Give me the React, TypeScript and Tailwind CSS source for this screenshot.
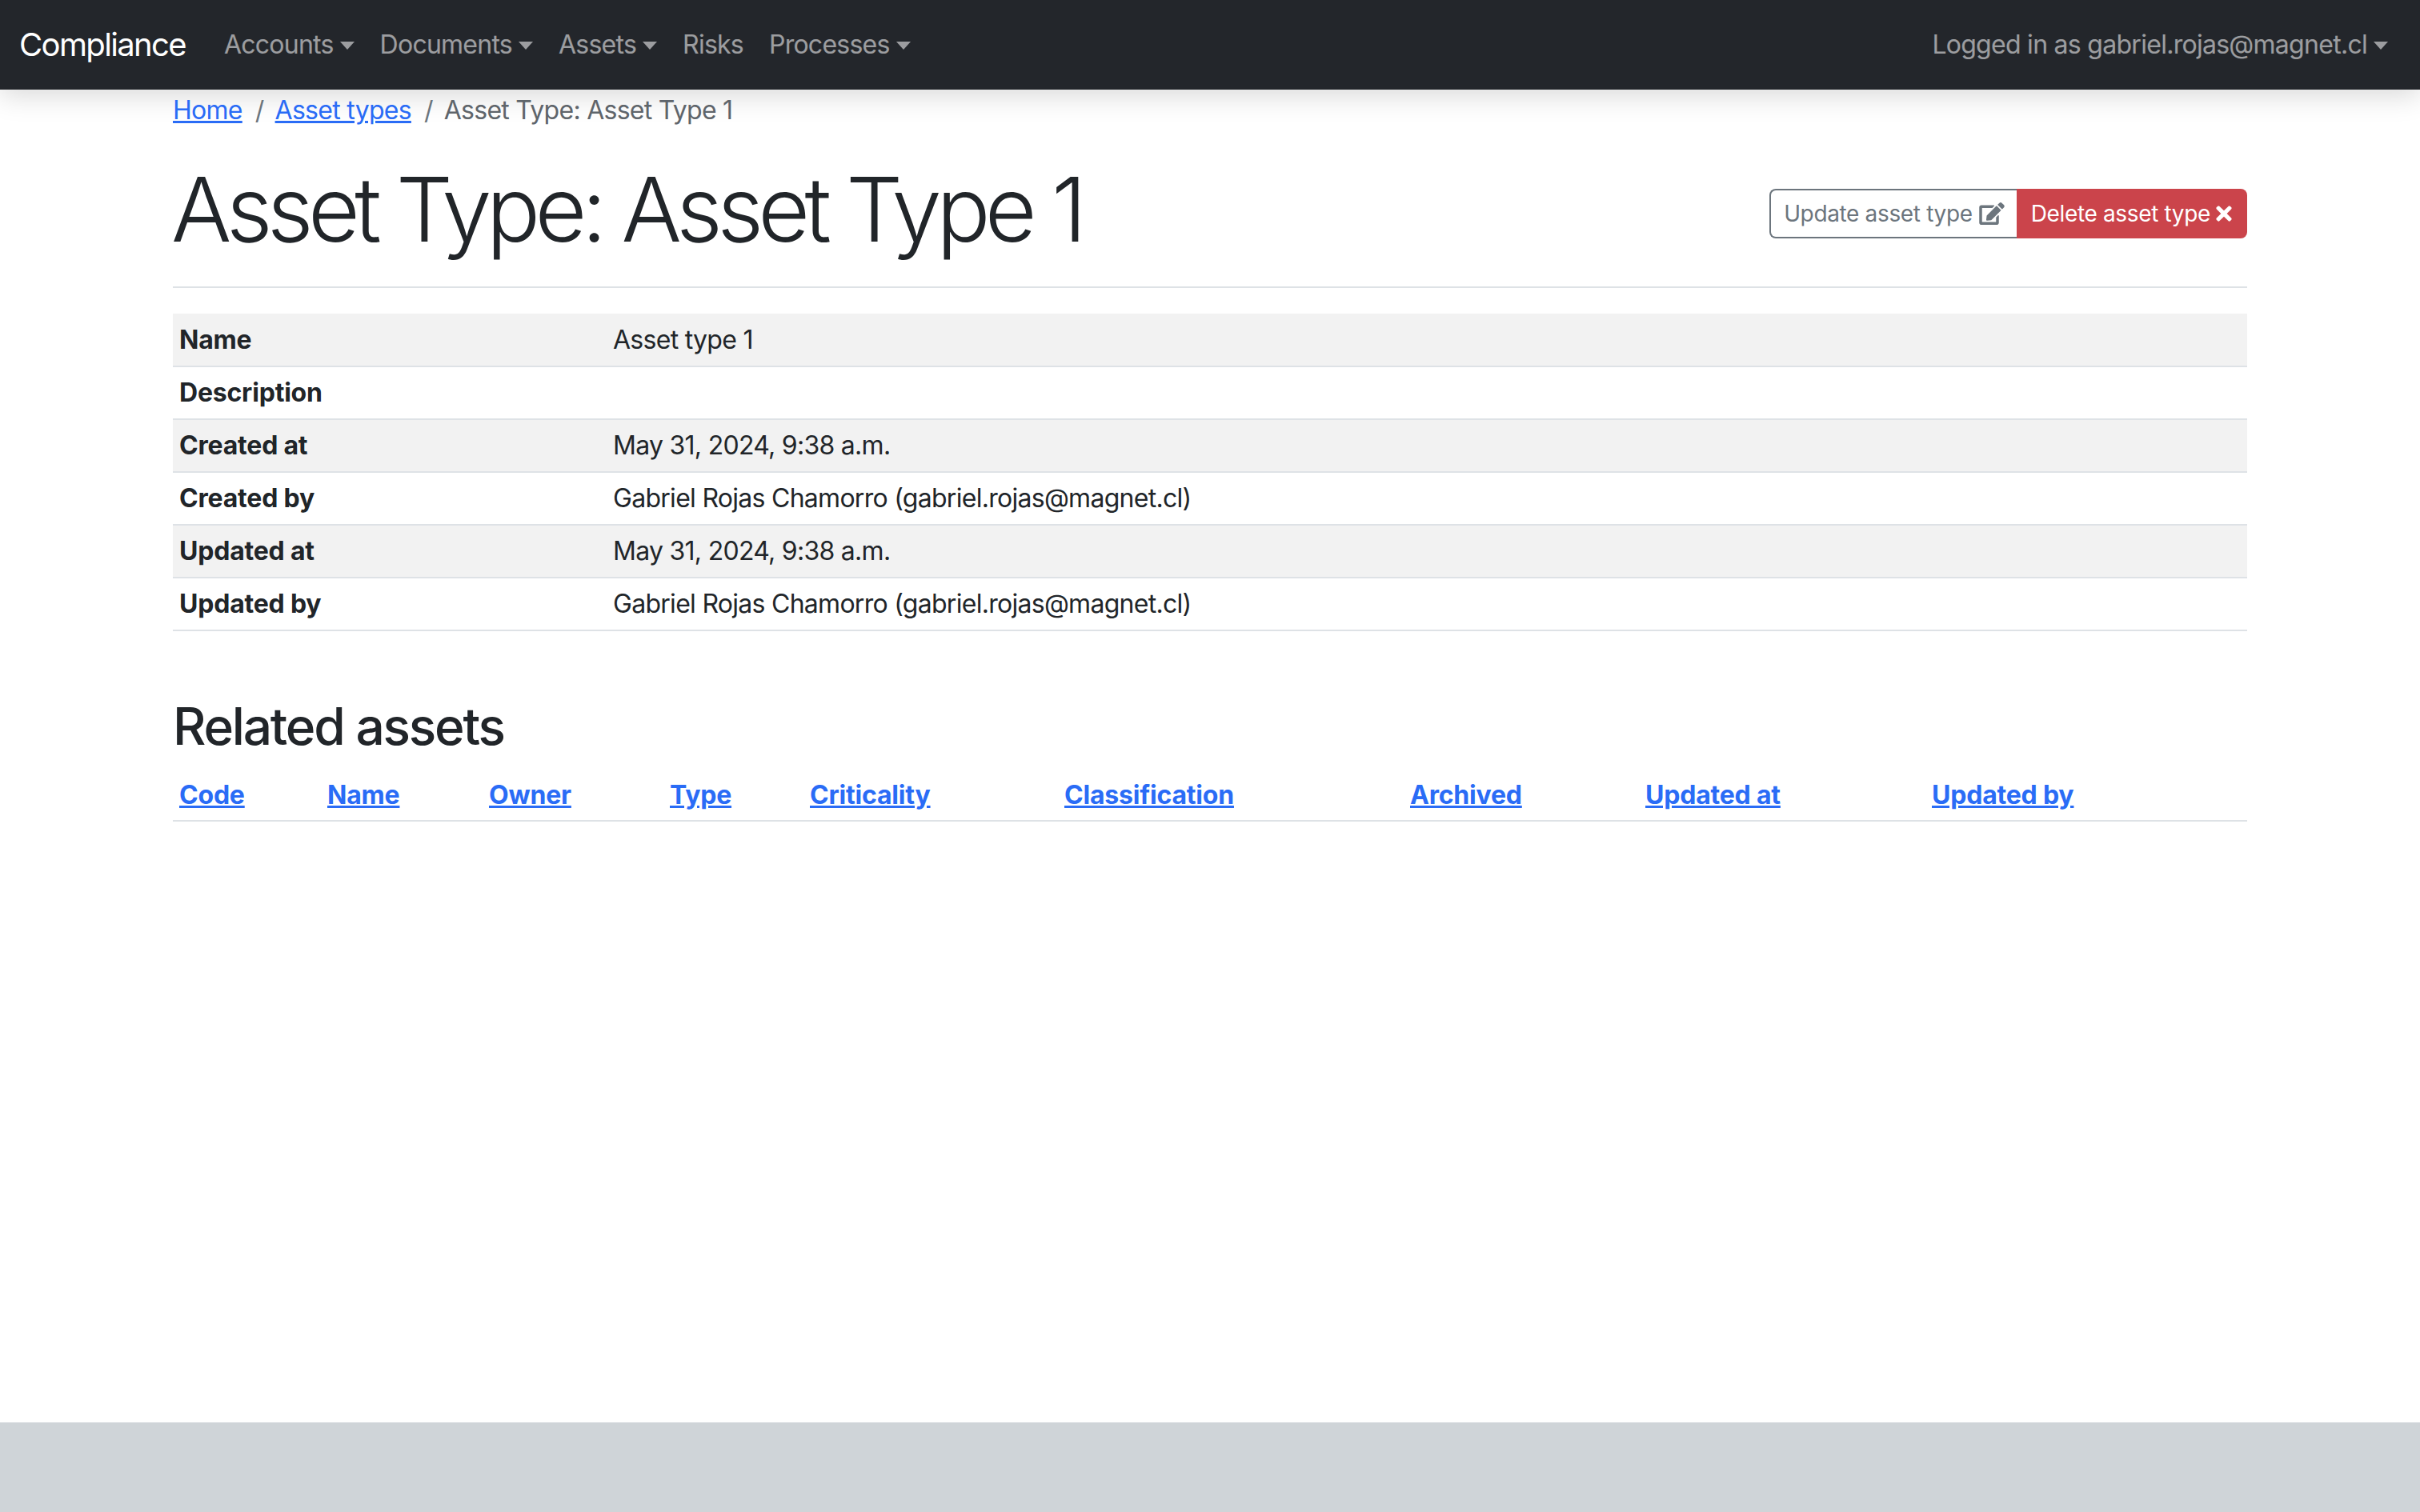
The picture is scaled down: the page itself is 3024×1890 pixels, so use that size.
import { FaEdit, FaTimes } from 'react-icons/fa';

const navItems = [
  { label: 'Accounts', caret: true },
  { label: 'Documents', caret: true },
  { label: 'Assets', caret: true },
  { label: 'Risks', caret: false },
  { label: 'Processes', caret: true },
];

const details = [
  ['Name', 'Asset type 1'],
  ['Description', ''],
  ['Created at', 'May 31, 2024, 9:38 a.m.'],
  ['Created by', 'Gabriel Rojas Chamorro (gabriel.rojas@magnet.cl)'],
  ['Updated at', 'May 31, 2024, 9:38 a.m.'],
  ['Updated by', 'Gabriel Rojas Chamorro (gabriel.rojas@magnet.cl)'],
];

const columns = [
  { label: 'Code', width: 185 },
  { label: 'Name', width: 202 },
  { label: 'Owner', width: 226 },
  { label: 'Type', width: 175 },
  { label: 'Criticality', width: 318 },
  { label: 'Classification', width: 432 },
  { label: 'Archived', width: 294 },
  { label: 'Updated at', width: 358 },
  { label: 'Updated by', width: 402 },
];

function Caret() {
  return (
    <span className="ml-[8px] inline-block align-[5px] border-x-[9px] border-t-[10px] border-x-transparent border-t-current" />
  );
}

export default function App() {
  return (
    <div className="flex min-h-screen flex-col bg-white font-['Inter','Liberation_Sans',sans-serif] text-[32px] leading-[48px] tracking-[-0.72px] text-[#212529]">
      {/* Navbar */}
      <nav className="flex h-[112px] items-center justify-between bg-[#23262b] px-[24px] shadow-[0_8px_32px_rgba(0,0,0,0.15)]">
        <div className="flex items-center">
          <a className="mr-[32px] text-[40px] tracking-[-1.65px] text-white">Compliance</a>
          {navItems.map((item) => (
            <a key={item.label} className="px-[16px] tracking-[-0.75px] text-white/55">
              {item.label}
              {item.caret && <Caret />}
            </a>
          ))}
        </div>
        <a className="pr-[16px] text-white/55">
          Logged in as gabriel.rojas@magnet.cl
          <Caret />
        </a>
      </nav>

      <main className="mx-auto w-[2592px] pt-[2px]">
        {/* Breadcrumb */}
        <div className="flex">
          <a className="text-[#2a6cf6] underline">Home</a>
          <span className="pr-[14px] pl-[16px] text-[#6c757d]">/</span>
          <a className="text-[#2a6cf6] underline">Asset types</a>
          <span className="pr-[14px] pl-[16px] text-[#6c757d]">/</span>
          <span className="text-[#5f656b]">Asset Type: Asset Type 1</span>
        </div>

        {/* Header */}
        <div className="mt-[32px] flex items-center justify-between border-b-2 border-[#dee2e6] pb-[30px]">
          <h1 className="-ml-[2px] text-[112px] leading-[134px] font-light tracking-[-6.7px]">Asset Type: Asset Type 1</h1>
          <div className="mt-[12px] flex text-[28px] leading-[42px] tracking-[-0.35px]">
            <a className="flex h-[62px] items-center gap-[8px] rounded-l-[8px] border-2 border-r-0 border-[#6c757d] pr-[15px] pl-[16px] text-[#6c757d]">
              Update asset type
              <FaEdit className="h-[28px] w-[32px]" />
            </a>
            <a className="flex h-[62px] items-center gap-[6px] rounded-r-[8px] bg-[#cb444b] px-[18px] text-white">
              Delete asset type
              <FaTimes className="h-[28px] w-[22px]" />
            </a>
          </div>
        </div>

        {/* Details */}
        <table className="mt-[32px] w-full table-fixed border-collapse">
          <tbody>
            {details.map(([label, value], i) => (
              <tr key={label} className={i % 2 === 0 ? 'border-b-2 border-[#dee2e6] bg-[#f2f2f2]' : 'border-b-2 border-[#dee2e6]'}>
                <th className="h-[66px] w-[542px] px-[8px] text-left font-bold tracking-[-0.2px]">{label}</th>
                <td className="h-[66px] px-[8px]">{value}</td>
              </tr>
            ))}
          </tbody>
        </table>

        {/* Related assets */}
        <h3 className="mt-[80px] mb-[14px] text-[64px] leading-[77px] font-medium tracking-[-2.2px]">Related assets</h3>
        <table className="w-full table-fixed border-collapse">
          <thead>
            <tr className="border-b-2 border-[#dee2e6]">
              {columns.map((col) => (
                <th key={col.label} style={{ width: col.width }} className="h-[66px] px-[8px] pt-[2px] text-left font-bold tracking-[-0.2px]">
                  <a className="text-[#2a6cf6] underline">{col.label}</a>
                </th>
              ))}
            </tr>
          </thead>
        </table>
      </main>

      <footer className="mt-auto h-[112px] bg-[#cfd4d8]" />
    </div>
  );
}
